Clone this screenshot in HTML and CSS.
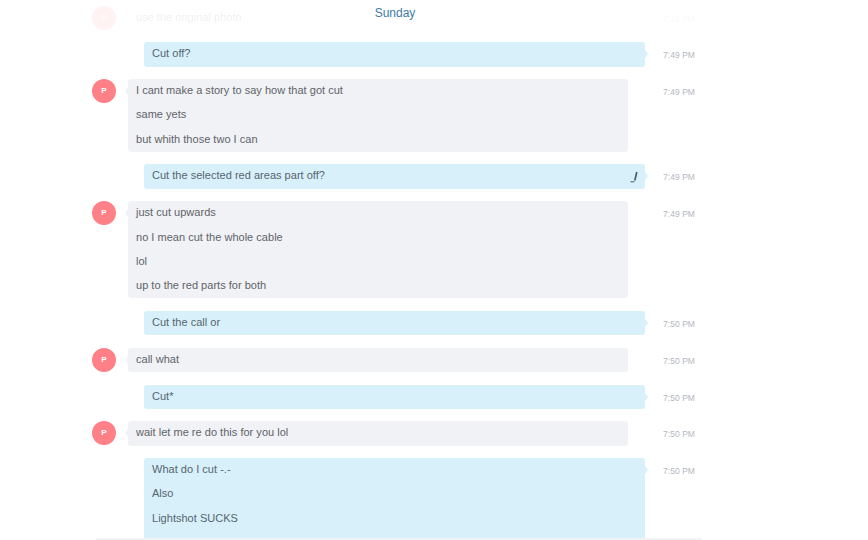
FILE: index.html
```html
<!DOCTYPE html>
<html lang="en">
<head>
    <meta charset="UTF-8">
    <meta name="viewport" content="width=device-width, initial-scale=1.0">
    <title>Chat</title>
    <link rel="stylesheet" href="styles.css">
</head>
<body>
    <div class="day">Sunday</div>
    <div class="chat">
        <div class="row theirs faded">
            <div class="avatar">P</div>
            <div class="bubble plain"><p>use the original photo</p></div>
            <div class="time">7:49 PM</div>
        </div>
        <div class="row mine">
            <div class="bubble"><p>Cut off?</p></div>
            <div class="time">7:49 PM</div>
        </div>
        <div class="row theirs">
            <div class="avatar">P</div>
            <div class="bubble">
                <p>I cant make a story to say how that got cut</p>
                <p>same yets</p>
                <p>but whith those two I can</p>
            </div>
            <div class="time">7:49 PM</div>
        </div>
        <div class="row mine">
            <div class="bubble">
                <p>Cut the selected red areas part off?</p>
                <svg class="edit" width="10" height="12" viewBox="0 0 10 12">
                    <path d="M6.8 1 4.8 9.5" stroke="#4d5d6b" stroke-width="1.7" fill="none"/>
                    <path d="M0.5 10.8H4.5" stroke="#4d5d6b" stroke-width="1" fill="none"/>
                </svg>
            </div>
            <div class="time">7:49 PM</div>
        </div>
        <div class="row theirs">
            <div class="avatar">P</div>
            <div class="bubble">
                <p>just cut upwards</p>
                <p>no I mean cut the whole cable</p>
                <p>lol</p>
                <p>up to the red parts for both</p>
            </div>
            <div class="time">7:49 PM</div>
        </div>
        <div class="row mine">
            <div class="bubble"><p>Cut the call or</p></div>
            <div class="time">7:50 PM</div>
        </div>
        <div class="row theirs">
            <div class="avatar">P</div>
            <div class="bubble"><p>call what</p></div>
            <div class="time">7:50 PM</div>
        </div>
        <div class="row mine">
            <div class="bubble"><p>Cut*</p></div>
            <div class="time">7:50 PM</div>
        </div>
        <div class="row theirs">
            <div class="avatar">P</div>
            <div class="bubble"><p>wait let me re do this for you lol</p></div>
            <div class="time">7:50 PM</div>
        </div>
        <div class="row mine">
            <div class="bubble">
                <p>What do I cut -.-</p>
                <p>Also</p>
                <p>Lightshot SUCKS</p>
                <p>Hey ?</p>
            </div>
            <div class="time">7:50 PM</div>
        </div>
    </div>
    <div class="bottom-line"></div>
</body>
</html>
```

FILE: styles.css
```css
html, body {
    height: 100%;
}

body {
    margin: 0;
    background: #ffffff;
    font-family: "Liberation Sans", Arial, sans-serif;
    overflow: hidden;
    position: relative;
}

.day {
    position: absolute;
    top: 5px;
    left: 295px;
    width: 200px;
    text-align: center;
    font-size: 12px;
    line-height: 16px;
    color: #2a6f9e;
}

.chat {
    display: flex;
    flex-direction: column;
    gap: 12.5px;
    padding: 5.5px 0 0 92px;
}

.row {
    display: flex;
    align-items: flex-start;
}

.row.faded {
    opacity: 0.09;
    filter: blur(0.4px);
}

.avatar {
    width: 24px;
    height: 24px;
    margin-right: 12px;
    border-radius: 50%;
    background: #ff8087;
    color: #ffffff;
    font-size: 8px;
    font-weight: bold;
    line-height: 24px;
    text-align: center;
    flex: none;
}

.bubble {
    position: relative;
    width: 500px;
    padding: 0 8px 1px;
    box-sizing: border-box;
    border-radius: 3px;
    background: #f0f2f6;
    color: #606368;
    font-size: 11px;
    letter-spacing: 0.02px;
}

.bubble p {
    margin: 0;
    line-height: 24.3px;
}

.bubble p:first-child {
    margin-top: -1px;
}

.bubble.plain {
    background: #ffffff;
}

.mine .bubble {
    width: 501px;
    margin-left: 52px;
    background: #d8f0fa;
    color: #56656f;
}

.theirs .bubble::before,
.mine .bubble::after {
    content: "";
    position: absolute;
    top: 8px;
    border-top: 4px solid transparent;
    border-bottom: 4px solid transparent;
}

.theirs .bubble::before {
    left: -3px;
    border-right: 3px solid #f0f2f6;
}

.theirs .bubble.plain::before {
    display: none;
}

.mine .bubble::after {
    right: -3px;
    border-left: 3px solid #d8f0fa;
}

.edit {
    position: absolute;
    top: 7px;
    right: 5px;
}

.time {
    flex: none;
    padding-top: 7px;
    font-size: 8.5px;
    line-height: 12px;
    letter-spacing: 0.05px;
    color: #b4b7bf;
}

.theirs .time {
    margin-left: 35px;
}

.mine .time {
    margin-left: 18px;
}

.bottom-line {
    position: absolute;
    left: 96px;
    bottom: 0;
    width: 606px;
    height: 2px;
    background: #f2f3f5;
}
```
